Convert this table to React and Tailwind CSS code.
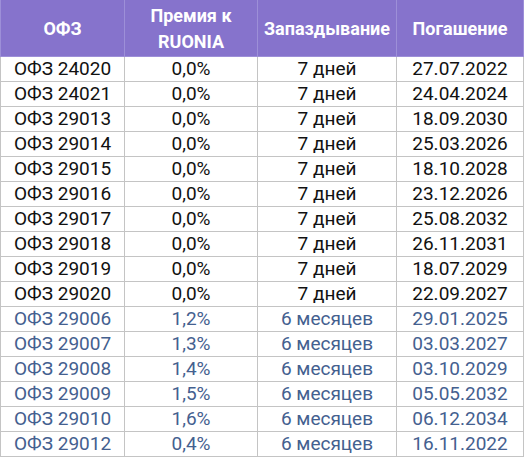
import React from "react";

const rows = [
  ["ОФЗ 24020", "0,0%", "7 дней", "27.07.2022", 0],
  ["ОФЗ 24021", "0,0%", "7 дней", "24.04.2024", 0],
  ["ОФЗ 29013", "0,0%", "7 дней", "18.09.2030", 0],
  ["ОФЗ 29014", "0,0%", "7 дней", "25.03.2026", 0],
  ["ОФЗ 29015", "0,0%", "7 дней", "18.10.2028", 0],
  ["ОФЗ 29016", "0,0%", "7 дней", "23.12.2026", 0],
  ["ОФЗ 29017", "0,0%", "7 дней", "25.08.2032", 0],
  ["ОФЗ 29018", "0,0%", "7 дней", "26.11.2031", 0],
  ["ОФЗ 29019", "0,0%", "7 дней", "18.07.2029", 0],
  ["ОФЗ 29020", "0,0%", "7 дней", "22.09.2027", 0],
  ["ОФЗ 29006", "1,2%", "6 месяцев", "29.01.2025", 1],
  ["ОФЗ 29007", "1,3%", "6 месяцев", "03.03.2027", 1],
  ["ОФЗ 29008", "1,4%", "6 месяцев", "03.10.2029", 1],
  ["ОФЗ 29009", "1,5%", "6 месяцев", "05.05.2032", 1],
  ["ОФЗ 29010", "1,6%", "6 месяцев", "06.12.2034", 1],
  ["ОФЗ 29012", "0,4%", "6 месяцев", "16.11.2022", 1],
];

export default function App() {
  return (
    <div className="w-[524px] h-[457px] bg-white" style={{ fontFamily: "Roboto, sans-serif" }}>
      <table className="border-collapse table-fixed w-[523px]">
        <colgroup>
          <col className="w-[124px]" />
          <col className="w-[133px]" />
          <col className="w-[139px]" />
          <col className="w-[127px]" />
        </colgroup>
        <thead>
          <tr className="h-[56px] bg-[#8673cc] text-white font-bold text-[18px] leading-[26px]">
            <th className="border border-[#9d8fd8] border-t-0 text-center p-0 pt-[2px]">ОФЗ</th>
            <th className="border border-[#9d8fd8] border-t-0 text-center p-0 pt-[2px]">Премия к<br />RUONIA</th>
            <th className="border border-[#9d8fd8] border-t-0 text-center p-0 pt-[2px] whitespace-nowrap">Запаздывание</th>
            <th className="border border-[#9d8fd8] border-t-0 text-center p-0 pt-[2px]">Погашение</th>
          </tr>
        </thead>
        <tbody>
          {rows.map((r, i) => (
            <tr key={i} className={`h-[25px] text-[19px] leading-[24px] ${r[4] ? "text-[#44608f]" : "text-[#111]"}`}>
              <td className="border border-[#c4c4c4] pl-[13px] p-0 whitespace-nowrap">{r[0]}</td>
              <td className="border border-[#c4c4c4] text-center p-0">{r[1]}</td>
              <td className="border border-[#c4c4c4] text-center p-0">{r[2]}</td>
              <td className="border border-[#c4c4c4] text-center p-0">{r[3]}</td>
            </tr>
          ))}
        </tbody>
      </table>
    </div>
  );
}
